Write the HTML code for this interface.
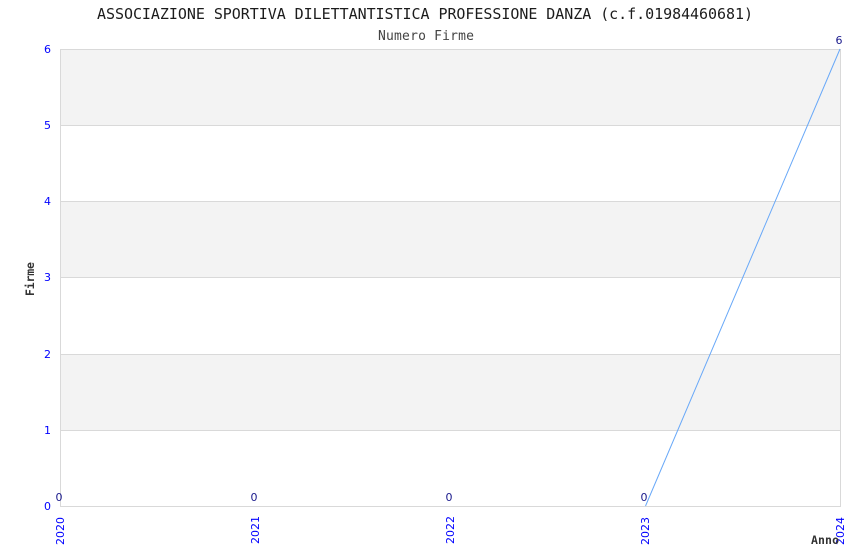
<!DOCTYPE html>
<html>
<head>
<meta charset="utf-8">
<style>
html,body{margin:0;padding:0;background:#fff;width:850px;height:550px;overflow:hidden}
svg{display:block}
.t{font-family:"DejaVu Sans Mono","Liberation Mono",monospace}
.s{font-family:"DejaVu Sans","Liberation Sans",sans-serif;font-size:11px;fill:#0000ff}
.v{font-family:"DejaVu Sans","Liberation Sans",sans-serif;font-size:11px;fill:#1a1a8c}
</style>
</head>
<body>
<svg width="850" height="550" viewBox="0 0 850 550" xmlns="http://www.w3.org/2000/svg">
<rect x="60" y="49" width="780" height="76" fill="#f3f3f3"/>
<rect x="60" y="201" width="780" height="77" fill="#f3f3f3"/>
<rect x="60" y="354" width="780" height="76" fill="#f3f3f3"/>
<g stroke="#d9d9d9" stroke-width="1" shape-rendering="crispEdges" fill="none">
<path d="M60 49.5H840M60 125.5H840M60 201.5H840M60 277.5H840M60 354.5H840M60 430.5H840"/>
<path d="M60.5 49V506M840.5 49V506M60 506.5H841"/>
</g>
<polyline points="645.5,506 840,49" fill="none" stroke="#68a8f8" stroke-width="1"/>
<text class="t" x="97" y="19" font-size="15" textLength="656" lengthAdjust="spacing" fill="#1c1c1c">ASSOCIAZIONE SPORTIVA DILETTANTISTICA PROFESSIONE DANZA (c.f.01984460681)</text>
<text class="t" x="378" y="40" font-size="13" textLength="96" lengthAdjust="spacing" fill="#444">Numero Firme</text>
<text class="s" x="44" y="53">6</text>
<text class="s" x="44" y="129">5</text>
<text class="s" x="44" y="205">4</text>
<text class="s" x="44" y="281">3</text>
<text class="s" x="44" y="358">2</text>
<text class="s" x="44" y="434">1</text>
<text class="s" x="44" y="510">0</text>
<text class="v" x="55.5" y="501">0</text>
<text class="v" x="250.5" y="501">0</text>
<text class="v" x="445.5" y="501">0</text>
<text class="v" x="640.5" y="501">0</text>
<text class="v" x="835.5" y="44">6</text>
<text class="s" transform="translate(64,545) rotate(-90)">2020</text>
<text class="s" transform="translate(259,544) rotate(-90)">2021</text>
<text class="s" transform="translate(454,544) rotate(-90)">2022</text>
<text class="s" transform="translate(649,545) rotate(-90)">2023</text>
<text class="s" transform="translate(844,545) rotate(-90)">2024</text>
<text class="t" transform="translate(34,296) rotate(-90)" font-size="11.5" font-weight="bold" fill="#333" textLength="34" lengthAdjust="spacing">Firme</text>
<text class="t" x="811" y="544" font-size="11.5" font-weight="bold" fill="#333" textLength="28" lengthAdjust="spacing">Anno</text>
</svg>
</body>
</html>
